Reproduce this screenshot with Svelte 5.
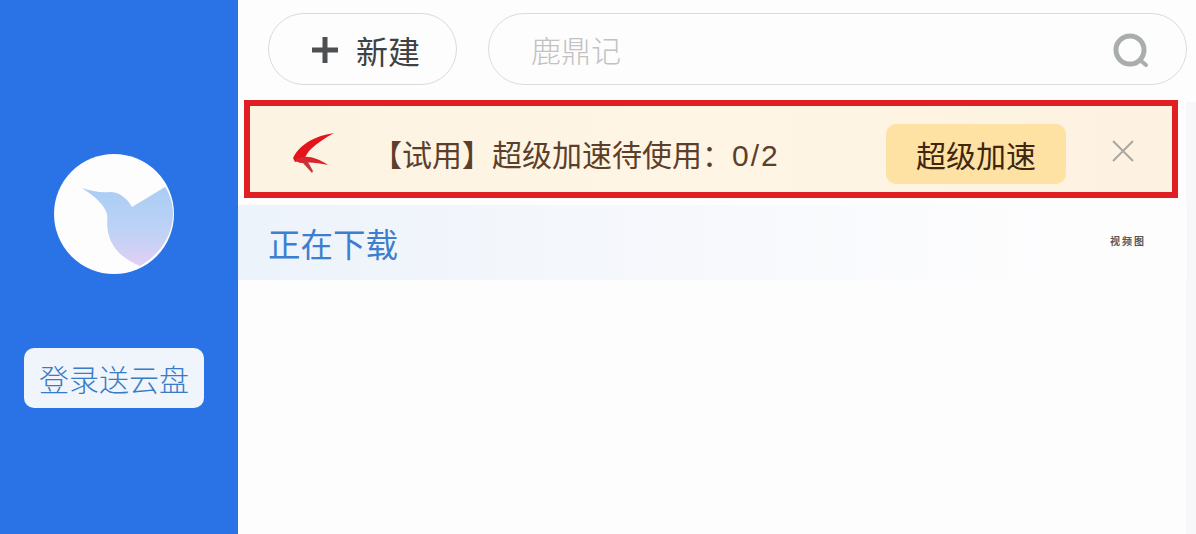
<script>
  const tools = ['视', '频', '图'];
</script>

<div class="window">
  <aside class="side">
    <div class="avatar">
      <svg viewBox="0 0 120 120" width="120" height="120">
        <defs>
          <linearGradient id="bird" x1="0" y1="0" x2="0" y2="1">
            <stop offset="0" stop-color="#aacdf4" />
            <stop offset="0.55" stop-color="#bdd2f6" />
            <stop offset="1" stop-color="#e2cff5" />
          </linearGradient>
        </defs>
        <path fill="url(#bird)" d="M28 34 C38 37 46 39 56 38 C65 38 73 44 78 53 L111 33 C116 40 119 50 119 60 C119 80 107 100 86 112 C72 106 60 98 55 82 C52 72 54 66 53 60 C50 50 40 42 28 34 Z" />
      </svg>
    </div>
    <button class="login">登录送云盘</button>
  </aside>

  <main class="content">
    <div class="top">
      <button class="new">
        <svg viewBox="0 0 28 28" width="28" height="28">
          <path d="M14 1 V27 M1 14 H27" stroke="#4c5053" stroke-width="5" fill="none" />
        </svg>
        <span>新建</span>
      </button>
      <div class="search">
        <span class="query">鹿鼎记</span>
        <svg viewBox="0 0 36 36" width="36" height="36">
          <circle cx="17" cy="17" r="14" stroke="#a9adad" stroke-width="5" fill="none" />
          <path d="M27 27 L33 32" stroke="#a9adad" stroke-width="4" stroke-linecap="round" />
        </svg>
      </div>
    </div>

    <div class="banner">
      <svg class="logo" viewBox="0 0 46 44" width="46" height="44">
        <path fill="#e3141b" d="M44 3 C32 5 12 10 3 28 L5 32 L14 30 C16 25 18 22 21 19 C27 13 35 8 44 3 Z" />
        <path fill="#d9262c" d="M5 30 C14 24 26 27 38 35 C28 33 20 32 14 33 C11 33 8 33 5 30 Z" />
        <path fill="#c4383c" d="M12 32 L22 43 L23 41 L18 32 Z" />
      </svg>
      <span class="msg">【试用】超级加速待使用：<span class="count">0/2</span></span>
      <button class="boost">超级加速</button>
      <svg class="close" viewBox="0 0 22 22" width="22" height="22">
        <path d="M1 1 L21 21 M21 1 L1 21" stroke="#aaa79f" stroke-width="2" fill="none" />
      </svg>
    </div>

    <div class="section">
      <span class="title">正在下载</span>
      <div class="tools">
        {#each tools as t}
          <span>{t}</span>
        {/each}
      </div>
    </div>
  </main>
</div>

<style>
  :global(body) {
    margin: 0;
    background: #fdfdfe;
  }

  .window {
    display: flex;
    width: 1196px;
    height: 534px;
    overflow: hidden;
    font-family: "Liberation Sans", "Noto Sans CJK SC", sans-serif;
  }

  .side {
    width: 238px;
    flex: none;
    box-sizing: border-box;
    padding: 154px 10px 0 0;
    background: #2a73e6;
    display: flex;
    flex-direction: column;
    align-items: center;
    gap: 74px;
  }

  .avatar {
    width: 120px;
    height: 120px;
    border-radius: 50%;
    background: #fdfdfe;
    overflow: hidden;
  }

  .avatar svg {
    display: block;
  }

  .login {
    width: 180px;
    height: 60px;
    padding: 0;
    border: none;
    border-radius: 10px;
    background: #f0f5fc;
    color: #3a7bc6;
    font: inherit;
    font-size: 30px;
    font-weight: 300;
  }

  .content {
    flex: 1;
    min-width: 0;
    display: flex;
    flex-direction: column;
    background: linear-gradient(to right, #fdfdfe 99%, #f7f7f9 99%) no-repeat bottom / 100% calc(100% - 102px);
  }

  .top {
    height: 100px;
    box-sizing: border-box;
    padding: 13px 9px 15px 30px;
    display: flex;
    gap: 31px;
  }

  .new {
    width: 189px;
    height: 72px;
    flex: none;
    padding: 2px 0 0 6px;
    box-sizing: border-box;
    border: 1px solid #d9dadd;
    border-radius: 36px;
    background: #fdfdfe;
    display: flex;
    align-items: center;
    justify-content: center;
    gap: 17px;
    color: #3f4245;
    font: inherit;
    font-size: 32px;
  }

  .search {
    flex: 1;
    height: 72px;
    box-sizing: border-box;
    border: 1px solid #dcdcdf;
    border-radius: 36px;
    padding: 3px 37px 0 42px;
    display: flex;
    align-items: center;
    justify-content: space-between;
    background: #fdfdfe;
  }

  .query {
    margin-top: -3px;
    font-size: 30px;
    font-weight: 300;
    color: #c2c2c2;
  }

  .banner {
    width: 934px;
    height: 98px;
    margin-left: 6px;
    box-sizing: border-box;
    border: 6px solid #e01f22;
    background: linear-gradient(to right, #fdf3e2, #fff5e5 50%, #fdf2e2);
    display: flex;
    align-items: center;
    padding: 10px 0 0 40px;
  }

  .logo {
    flex: none;
    margin-top: -4px;
    filter: blur(0.4px);
  }

  .msg {
    width: 514px;
    margin: -2px 0 0 36px;
    flex: none;
    font-size: 30px;
    color: #5c3f2a;
    white-space: nowrap;
  }

  .count {
    letter-spacing: 2px;
  }

  .boost {
    width: 180px;
    height: 60px;
    flex: none;
    padding: 0;
    border: none;
    border-radius: 10px;
    background: #fde2a3;
    color: #3f2610;
    font: inherit;
    font-size: 30px;
  }

  .close {
    flex: none;
    margin: -6px 0 0 46px;
  }

  .section {
    height: 75px;
    margin: 7px 9px 0 0;
    box-sizing: border-box;
    padding: 0 43px 0 30px;
    display: flex;
    align-items: center;
    justify-content: space-between;
    background: linear-gradient(to right, #edf3fb, #f6f8fc 45%, #fdfdfe 85%);
  }

  .title {
    font-size: 32.5px;
    color: #3c7fd0;
  }

  .tools {
    display: flex;
    gap: 2px;
    margin-top: -4px;
    font-size: 10px;
    font-weight: bold;
    color: #55585c;
  }
</style>
